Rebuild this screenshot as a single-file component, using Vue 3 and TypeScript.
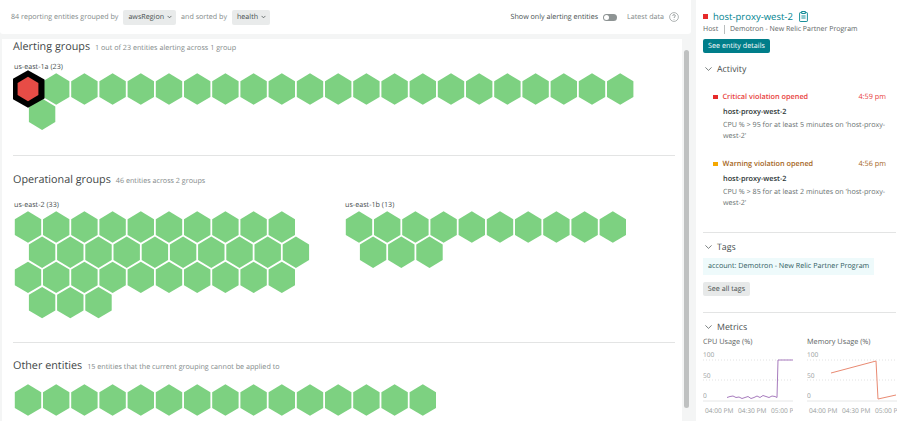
<script setup lang="ts">
type Group = { label: string; count: number; critical?: boolean };

const RX = 13.2;
const RY = 15.7;
const PITCH_X = 28.2;
const PITCH_Y = 25.2;
const PER_ROW = 10;

function hexPoints(cx: number, cy: number, rx = RX, ry = RY): string {
  const q = ry / 2;
  return [
    [cx, cy - ry],
    [cx + rx, cy - q],
    [cx + rx, cy + q],
    [cx, cy + ry],
    [cx - rx, cy + q],
    [cx - rx, cy - q],
  ]
    .map((p) => p.map((n) => n.toFixed(1)).join(","))
    .join(" ");
}

function cells(count: number, perRow = PER_ROW) {
  const out: { x: number; y: number }[] = [];
  for (let i = 0; i < count; i++) {
    const row = Math.floor(i / perRow);
    const col = i % perRow;
    out.push({
      x: 15 + col * PITCH_X + (row % 2 ? PITCH_X / 2 : 0),
      y: 19 + row * PITCH_Y,
    });
  }
  return out;
}

function svgHeight(count: number, perRow = PER_ROW) {
  return 38 + (Math.ceil(count / perRow) - 1) * PITCH_Y;
}

const alerting = cells(23, 22);
const operational: Group[] = [
  { label: "us-east-2 (33)", count: 33 },
  { label: "us-east-1b (13)", count: 13 },
];
const others = cells(15, 15);

const violations = [
  {
    tone: "critical",
    title: "Critical violation opened",
    time: "4:59 pm",
    text: "CPU % > 95 for at least 5 minutes on 'host-proxy-west-2'",
  },
  {
    tone: "warning",
    title: "Warning violation opened",
    time: "4:56 pm",
    text: "CPU % > 85 for at least 2 minutes on 'host-proxy-west-2'",
  },
];

const charts = [
  {
    title: "CPU Usage (%)",
    color: "#a77bbd",
    line: "24,47.5 27,46.5 30,46 33,47.5 36,47 39,48.5 42,47.5 45,46.5 48,48.5 51,47.5 54,46 57,47.5 60,45.5 63,46.5 66,47.5 69,46 72,46.5 74,47.5 75,10 90,10",
  },
  {
    title: "Memory Usage (%)",
    color: "#e98a72",
    line: "24,23 69,11 71,49 89,45",
  },
];
</script>

<template>
  <div class="page">
    <div class="left">
      <div class="toolbar">
        <span class="muted">84 reporting entities grouped by</span>
        <span class="pill">awsRegion <svg width="5" height="4" viewBox="0 0 6 4"><path d="M.7.7 3 3l2.3-2.3" fill="none" stroke="#464e4e" stroke-width=".9" /></svg></span>
        <span class="muted">and sorted by</span>
        <span class="pill">health <svg width="5" height="4" viewBox="0 0 6 4"><path d="M.7.7 3 3l2.3-2.3" fill="none" stroke="#464e4e" stroke-width=".9" /></svg></span>
        <span class="spacer"></span>
        <span class="only">Show only alerting entities</span>
        <span class="toggle"><span class="knob"></span></span>
        <span class="muted latest">Latest data</span>
        <svg class="help" width="10" height="10" viewBox="0 0 10 10">
          <circle cx="5" cy="5" r="4.4" fill="none" stroke="#8e9494" stroke-width=".7" />
          <path d="M3.7 3.8C3.8 3 4.3 2.6 5 2.6s1.3.5 1.3 1.2c0 1-1.3 1.1-1.3 2.2" fill="none" stroke="#6f7777" stroke-width=".7" />
          <circle cx="5" cy="7.4" r=".45" fill="#6f7777" />
        </svg>
      </div>

      <div class="main">
        <div class="content">
          <section class="sec alerting">
            <div class="heading"><h2>Alerting groups</h2><span>1 out of 23 entities alerting across 1 group</span></div>
            <div class="label first">us-east-1a (23)</div>
            <svg class="hexes" width="650" :height="svgHeight(23, 22)">
              <polygon v-for="(c, i) in alerting.slice(1)" :key="i" :points="hexPoints(c.x, c.y)" fill="#7dd181" />
              <polygon :points="hexPoints(alerting[0].x, alerting[0].y, 16.5, 18.8)" fill="#000" />
              <polygon :points="hexPoints(alerting[0].x, alerting[0].y, 10.4, 12.2)" fill="#e74c46" />
            </svg>
          </section>

          <section class="sec operational">
            <div class="heading"><h2>Operational groups</h2><span>46 entities across 2 groups</span></div>
            <div class="groups">
              <div v-for="g in operational" :key="g.label" class="group">
                <div class="label">{{ g.label }}</div>
                <svg class="hexes" width="310" :height="svgHeight(g.count)">
                  <polygon v-for="(c, i) in cells(g.count)" :key="i" :points="hexPoints(c.x, c.y)" fill="#7dd181" />
                </svg>
              </div>
            </div>
          </section>

          <section class="sec other">
            <div class="heading"><h2>Other entities</h2><span>15 entities that the current grouping cannot be applied to</span></div>
            <svg class="hexes" width="650" height="38">
              <polygon v-for="(c, i) in others" :key="i" :points="hexPoints(c.x, c.y)" fill="#7dd181" />
            </svg>
          </section>
        </div>
        <div class="track"><div class="thumb"></div></div>
      </div>
    </div>

    <aside class="side">
      <div class="entity">
        <span class="sq red"></span>
        <a class="name">host-proxy-west-2</a>
        <svg width="9" height="11" viewBox="0 0 9 11" fill="none" stroke="#00838f" stroke-width=".9">
          <rect x=".6" y="1.6" width="7.8" height="8.9" rx=".6" />
          <rect x="2.8" y=".5" width="3.4" height="2" fill="#fff" />
          <path d="M2.4 5h4.2M2.4 7h4.2" />
        </svg>
      </div>
      <div class="meta"><span class="kind">Host</span><i></i><span>Demotron - New Relic Partner Program</span></div>
      <button class="primary" type="button">See entity details</button>

      <div class="acc activity">
        <svg width="7" height="4" viewBox="0 0 7 4"><path d="M.4.4 3.5 3.4 6.6.4" fill="none" stroke="#464e4e" stroke-width=".7" /></svg>
        <span>Activity</span>
      </div>
      <div v-for="v in violations" :key="v.title" class="viol" :class="v.tone">
        <div class="viol-head">
          <span class="sq small"></span>
          <b>{{ v.title }}</b>
          <em>{{ v.time }}</em>
        </div>
        <div class="host">host-proxy-west-2</div>
        <p>{{ v.text }}</p>
      </div>

      <div class="rule first-rule"></div>
      <div class="acc">
        <svg width="7" height="4" viewBox="0 0 7 4"><path d="M.4.4 3.5 3.4 6.6.4" fill="none" stroke="#464e4e" stroke-width=".7" /></svg>
        <span>Tags</span>
      </div>
      <div class="chip">account: Demotron - New Relic Partner Program</div>
      <button class="ghost" type="button">See all tags</button>

      <div class="rule second-rule"></div>
      <div class="acc">
        <svg width="7" height="4" viewBox="0 0 7 4"><path d="M.4.4 3.5 3.4 6.6.4" fill="none" stroke="#464e4e" stroke-width=".7" /></svg>
        <span>Metrics</span>
      </div>
      <div class="charts">
        <div v-for="c in charts" :key="c.title" class="chart">
          <div class="chart-title">{{ c.title }}</div>
          <svg width="90" height="71" viewBox="0 0 90 71">
            <line x1="0" x2="90" y1="10" y2="10" class="dots" />
            <line x1="0" x2="90" y1="30" y2="30" class="dots" />
            <line x1="0" x2="90" y1="51" y2="51" stroke="#dfe1e1" stroke-width=".8" />
            <text x="0" y="6.5">100</text>
            <text x="0" y="27.5">50</text>
            <text x="0" y="47.5">0</text>
            <text x="2" y="62.5">04:00 PM</text>
            <text x="35" y="62.5">04:30 PM</text>
            <text x="68" y="62.5">05:00 PM</text>
            <polyline :points="c.line" fill="none" :stroke="c.color" stroke-width="1" />
          </svg>
        </div>
      </div>
    </aside>
  </div>
</template>

<style>
html,
body {
  margin: 0;
  overflow: hidden;
  background: #f4f5f5;
}
</style>

<style scoped>
.page {
  display: flex;
  width: 900px;
  height: 421px;
  overflow: hidden;
  font-family: "Open Sans", "Liberation Sans", sans-serif;
  text-rendering: geometricPrecision;
  color: #464e4e;
  background: #f4f5f5;
}

.left {
  width: 691px;
  display: flex;
  flex-direction: column;
  gap: 5px;
}

.toolbar {
  height: 34px;
  flex: none;
  display: flex;
  align-items: center;
  padding: 0 12px 0 11px;
  box-sizing: border-box;
  background: #fff;
  border-radius: 0 0 3px 3px;
  font-size: 7.15px;
}
.muted {
  color: #828989;
}
.pill {
  display: flex;
  align-items: center;
  gap: 3px;
  height: 15px;
  margin: 0 5px;
  padding: 0 4px 0 5px;
  background: #e9ebeb;
  border-radius: 2px;
  color: #464e4e;
}
.spacer {
  flex: 1;
}
.only {
  color: #464e4e;
}
.toggle {
  width: 14px;
  height: 7px;
  margin: 0 10px 0 5px;
  background: #8e9494;
  border-radius: 4px;
  display: flex;
  align-items: center;
}
.knob {
  width: 5px;
  height: 5px;
  margin-left: 1px;
  border-radius: 50%;
  background: #fff;
}
.latest {
  margin-right: 5px;
}

.main {
  flex: 1;
  min-height: 0;
  display: flex;
  margin-left: 2px;
}
.content {
  flex: 1;
  background: #fff;
  padding: 0 7px 0 11px;
  overflow: hidden;
}
.track {
  width: 9px;
  flex: none;
  box-sizing: border-box;
  padding: 11px 2px 13px;
}
.thumb {
  height: 100%;
  background: #bfc1c1;
  border-radius: 3px;
}

.heading {
  display: flex;
  align-items: baseline;
  gap: 5px;
}
.heading h2 {
  margin: 0;
  font-size: 10.8px;
  font-weight: 400;
  line-height: 16px;
  color: #3f4747;
}
.heading span {
  font-size: 7.2px;
  color: #828989;
}
.label {
  padding: 1px 0 0 1px;
  font-size: 7.2px;
  line-height: 11px;
  color: #464e4e;
}
.label.first {
  margin-top: 6px;
}
.hexes {
  display: block;
  margin-top: -3px;
}
.alerting {
  height: 116px;
  border-bottom: 1px solid #e3e4e4;
}
.operational {
  height: 170px;
  padding-top: 16px;
  border-bottom: 1px solid #e3e4e4;
}
.groups {
  display: flex;
  margin-top: 11px;
}
.group {
  width: 331px;
}
.other {
  padding-top: 15px;
}
.other .hexes {
  margin-top: 7px;
}

.side {
  width: 204px;
  margin-left: 5px;
  box-sizing: border-box;
  padding: 8px 4px 0 7px;
  background: #fff;
  font-size: 7.3px;
  overflow: hidden;
}
.entity {
  display: flex;
  align-items: center;
  gap: 5px;
  height: 16px;
}
.sq {
  flex: none;
  width: 5px;
  height: 5px;
  background: #e62a2a;
}
.name {
  font-size: 9.5px;
  color: #00838f;
  margin-right: 1px;
}
.meta {
  display: flex;
  align-items: center;
  height: 12px;
  margin-top: -1px;
  font-size: 7px;
  color: #5d6464;
}
.kind {
  width: 16px;
}
.meta i {
  width: 1px;
  height: 9px;
  margin: 0 5px;
  background: #b9bdbd;
}
.primary,
.ghost {
  display: block;
  border: 0;
  padding: 0;
  border-radius: 2px;
  font-family: inherit;
  font-size: 7.2px;
  text-rendering: geometricPrecision;
}
.primary {
  width: 67px;
  height: 14px;
  margin-top: 4px;
  background: #007e8a;
  color: #fff;
}
.acc {
  display: flex;
  align-items: center;
  gap: 5px;
  height: 14px;
  padding-left: 2px;
  font-size: 8.8px;
  color: #464e4e;
}
.activity {
  margin-top: 9px;
}
.viol {
  padding-left: 10px;
  margin-right: 9px;
}
.viol-head {
  display: flex;
  align-items: center;
  gap: 5px;
  height: 12px;
  margin-right: 1px;
}
.viol-head b {
  flex: 1;
  font-weight: 600;
}
.viol-head em {
  font-style: normal;
}
.small {
  width: 4.5px;
  height: 4.5px;
}
.viol.critical {
  margin-top: 15px;
}
.viol.warning {
  margin-top: 17px;
}
.critical .viol-head {
  color: #e8403c;
}
.critical .small {
  background: #e62a2a;
}
.warning .viol-head {
  color: #a5651b;
}
.warning .small {
  background: #f5a800;
}
.host {
  margin-top: 4px;
  padding-left: 10px;
  font-weight: 600;
  line-height: 11px;
  color: #2a3434;
}
.viol p {
  margin: 2px 0 0 10px;
  font-size: 7.15px;
  line-height: 10.5px;
  color: #6a7272;
}
.rule {
  height: 1px;
  background: #e3e4e4;
}
.first-rule {
  margin: 24px 0 7px;
}
.second-rule {
  margin: 16px 0 7px;
}
.chip {
  width: 171px;
  box-sizing: border-box;
  height: 17px;
  margin-top: 4px;
  padding-left: 5px;
  font-size: 7.2px;
  line-height: 17px;
  background: #eefafb;
  color: #2f5a5e;
  white-space: nowrap;
}
.ghost {
  width: 47px;
  height: 14px;
  margin-top: 7px;
  background: #e7e9e9;
  color: #464e4e;
}
.charts {
  display: flex;
  gap: 14px;
  margin-top: 3px;
}
.chart {
  width: 90px;
  flex: none;
}
.chart svg {
  display: block;
  margin-top: 2px;
}
.chart-title {
  font-size: 7.3px;
  line-height: 11px;
  color: #5d6464;
}
.chart text {
  font-size: 6.6px;
  fill: #9aa0a0;
}
.dots {
  stroke: #d9dbdb;
  stroke-width: 0.8;
  stroke-dasharray: 1 2;
}
</style>
